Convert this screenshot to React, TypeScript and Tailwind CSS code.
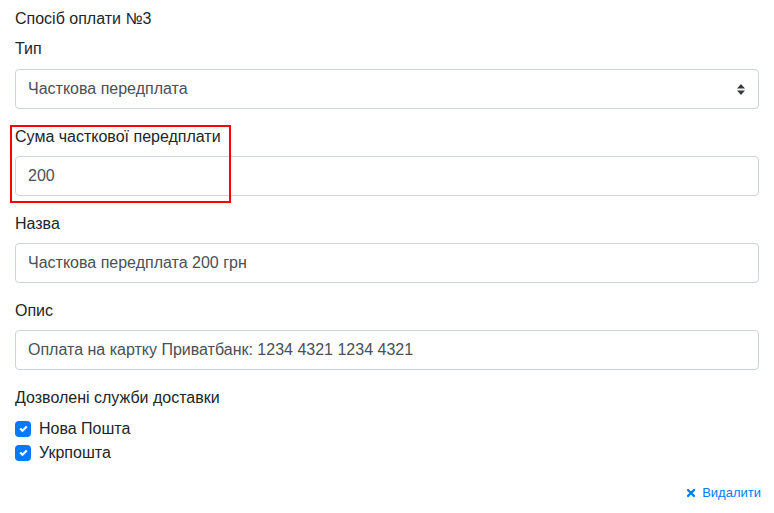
import React from "react";
import { FaTimes } from "react-icons/fa";

function Check({ label }: { label: string }) {
  return (
    <div className="flex h-6 items-center">
      <span className="flex h-4 w-4 items-center justify-center rounded-[4px] bg-[#007bff]">
        <svg width="9" height="8" viewBox="0 0 8 8">
          <path fill="#fff" d="M6.564.75l-3.59 3.612-1.538-1.55L0 4.26l2.974 2.99L8 2.193z" />
        </svg>
      </span>
      <span className="ml-2 text-[#212529]">{label}</span>
    </div>
  );
}

function Field({ label, value }: { label: string; value: string }) {
  return (
    <div className="mb-4">
      <div className="mb-[7px] h-6 leading-6 text-[#212529]">{label}</div>
      <div className="flex h-10 items-center rounded-[4px] border border-[#ced4da] bg-white px-3 text-[#495057]">
        {value}
      </div>
    </div>
  );
}

export default function App() {
  return (
    <div
      className="relative min-h-[513px] bg-white px-[15px] pt-[7px] text-base"
      style={{ fontFamily: "'Liberation Sans', Arial, sans-serif" }}
    >
      <div className="mb-[6px] h-6 leading-6 text-[#212529]">Спосіб оплати №3</div>

      <div className="mb-4">
        <div className="mb-[8px] h-6 leading-6 text-[#212529]">Тип</div>
        <div className="flex h-10 items-center justify-between rounded-[4px] border border-[#ced4da] bg-white pl-3 pr-[13px] text-[#495057]">
          <span>Часткова передплата</span>
          <svg width="8" height="11" viewBox="0 0 8 11">
            <path fill="#343a40" d="M4 0L0 4.5h8z M4 11L0 6.5h8z" />
          </svg>
        </div>
      </div>

      <div className="relative">
        <Field label="Сума часткової передплати" value="200" />
        <div className="pointer-events-none absolute left-[-5px] top-0 h-[78px] w-[221px] border-2 border-[#ff0000]" />
      </div>

      <Field label="Назва" value="Часткова передплата 200 грн" />
      <Field label="Опис" value="Оплата на картку Приватбанк: 1234 4321 1234 4321" />

      <div className="mb-[6px] h-6 leading-6 text-[#212529]">Дозволені служби доставки</div>
      <div className="pt-px">
        <Check label="Нова Пошта" />
        <Check label="Укрпошта" />
      </div>

      <div className="mr-[-2px] mt-4 flex justify-end">
        <a className="flex items-center gap-[6px] text-[13px] leading-6 text-[#007bff]" href="#">
          <FaTimes className="h-[12px] w-[10px]" />
          Видалити
        </a>
      </div>
    </div>
  );
}
